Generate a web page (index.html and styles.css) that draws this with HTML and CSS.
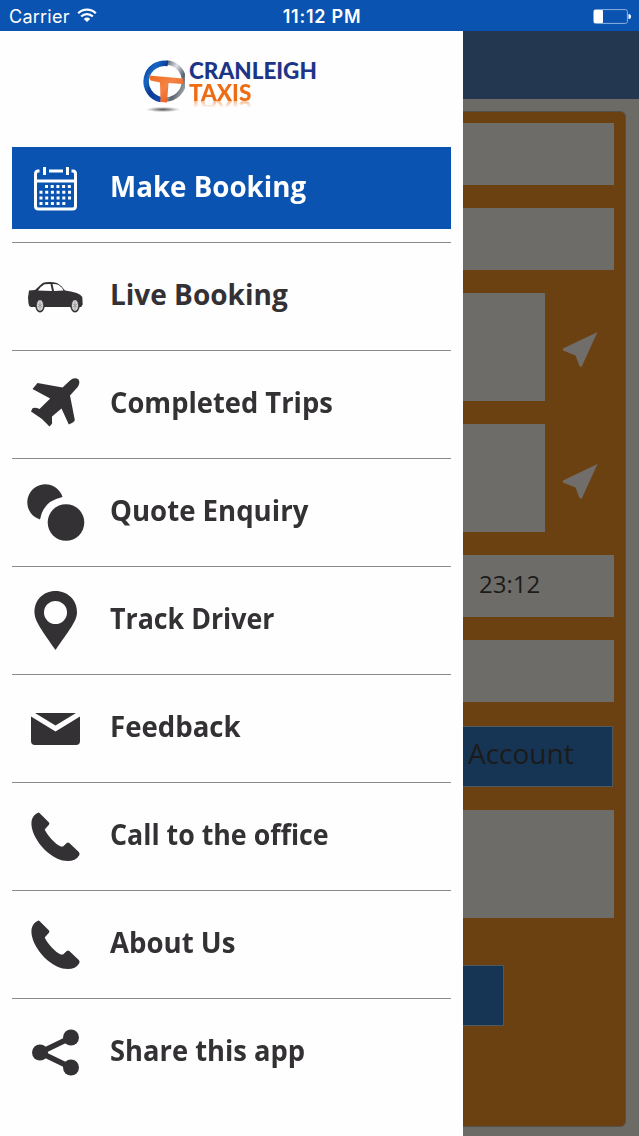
FILE: index.html
```
<!DOCTYPE html>
<html lang="en">
<head>
    <meta charset="UTF-8">
    <meta name="viewport" content="width=device-width, initial-scale=1.0">
    <title>Cranleigh Taxis</title>
    <link rel="stylesheet" href="styles.css">
</head>
<body>
    <header class="status-bar">
        <div class="carrier">
            <span>Carrier</span>
            <svg width="20" height="15" viewBox="0 0 20 15" fill="none" stroke="#fff" stroke-width="2.3">
                <path d="M1.2 5.2a12.5 12.5 0 0 1 17.6 0"/>
                <path d="M4.2 8.5a8.2 8.2 0 0 1 11.6 0"/>
                <path d="M10 14 6.8 10.9a4.6 4.6 0 0 1 6.4 0z" fill="#fff" stroke="none"/>
            </svg>
        </div>
        <div class="clock">11:12 PM</div>
        <div class="battery">
            <svg width="38" height="15" viewBox="0 0 38 15">
                <rect x=".6" y=".6" width="33.8" height="13.8" rx="2" fill="none" stroke="#8db2e3"/>
                <rect x="1" y="1" width="9" height="13" rx="1" fill="#fff"/>
                <path d="M35.5 5a2.5 2.5 0 0 1 0 5z" fill="#fff"/>
            </svg>
        </div>
    </header>

    <div class="screen">
        <nav class="drawer">
            <div class="logo">
                <svg width="46" height="56" viewBox="0 0 46 56">
                    <defs>
                        <linearGradient id="ring" x1="0" y1="0" x2="1" y2="1">
                            <stop offset="0" stop-color="#0c3a93"/>
                            <stop offset=".25" stop-color="#1667c4"/>
                            <stop offset=".5" stop-color="#0c3a93"/>
                            <stop offset="1" stop-color="#1450b8"/>
                        </linearGradient>
                        <linearGradient id="steel" x1="0" y1="0" x2="1" y2="1">
                            <stop offset="0" stop-color="#4d5763"/>
                            <stop offset=".35" stop-color="#dfe2e6"/>
                            <stop offset=".65" stop-color="#59626d"/>
                            <stop offset="1" stop-color="#c4c8cc"/>
                        </linearGradient>
                        <linearGradient id="tee" x1="0" y1="0" x2="1" y2="1">
                            <stop offset="0" stop-color="#ee6a1e"/>
                            <stop offset=".45" stop-color="#f58345"/>
                            <stop offset="1" stop-color="#e04c08"/>
                        </linearGradient>
                        <radialGradient id="shade">
                            <stop offset="0" stop-color="#555"/>
                            <stop offset=".5" stop-color="#999" stop-opacity=".8"/>
                            <stop offset="1" stop-color="#ccc" stop-opacity="0"/>
                        </radialGradient>
                    </defs>
                    <ellipse cx="24" cy="51.5" rx="18" ry="2.8" fill="url(#shade)"/>
                    <path d="M27 4.5a18.300 18.300 0 0 1-1 37" fill="none" stroke="url(#steel)" stroke-width="4.500"/>
                    <path d="M29 5.600A18.300 18.300 0 1 0 22 41.600" fill="none" stroke="url(#ring)" stroke-width="5.500"/>
                    <path d="M9.500 17.500 44 20.500v5.500L29.500 25 28 44.500l-6.500-.6-.5-19.400L11.500 22.500z" fill="url(#tee)"/>
                </svg>
                <div class="logo-text">
                    <span class="name">CRANLEIGH</span>
                    <span class="taxis">TAXIS</span>
                </div>
            </div>

            <ul class="menu">
                <li class="item active">
                    <svg class="icon" viewBox="0 0 60 60" fill="none" stroke="#fff">
                        <path d="M12.500 11H11q-2.500 0-2.500 3v32q0 3 3 3h34q3 0 3-3V14q0-3-2.500-3h-1.500M22 11h14M9 21h39" stroke-width="3"/>
                        <path d="M17.500 7v8M40.500 7v8" stroke-width="3"/>
                        <path d="M18 26.500h27M12.500 32.300h33M12.500 38h33M12.500 43.500h27" stroke-width="3" stroke-dasharray="3 2.700"/>
                    </svg>
                    <span class="label make">Make Booking</span>
                </li>
                <li class="item">
                    <svg class="icon" viewBox="0 0 60 60" fill="#333133">
                        <path d="M4 23.500 10 23l6.500-6q1.500-1.500 4-1.700 6-.8 11.500.7 4 2 8 7.500 6 .5 11.700 2.500 4 1.500 5.600 4l.4 7.500-1.500 2.500H6q-2.500-1-2.500-3.500l-.5-6z"/>
                        <path d="M13 23.500q3.500-4.700 6.500-6.200l6-.4L27 24zM27.500 16.900q4-.2 6.500 1.300 3 2 4.500 5.300L29 24z" fill="#fff"/>
                        <g fill="#d8d8d8" stroke="#333133" stroke-width="1.500">
                            <ellipse cx="15" cy="38.500" rx="4" ry="6.300"/>
                            <ellipse cx="50" cy="38.500" rx="4" ry="6.300"/>
                        </g>
                        <path d="M15 33v11M11.500 36l7 5M18.500 36l-7 5M50 33v11M46.500 36l7 5M53.500 36l-7 5" stroke="#888" stroke-width=".7"/>
                    </svg>
                    <span class="label live">Live Booking</span>
                </li>
                <li class="item">
                    <svg class="icon" viewBox="0 0 60 60" fill="#333133">
                        <path d="M53.500 4.500c1.500 2 1 5-.8 7.600L45 20.500l4.800 24.500q-.2 2-6 4.500L36.500 33.500 27 41.500v5q1 2-2.500 5L17 44 6 36.500l1.500-3.200q2.500-1.300 7 .6l10.700-10.400L7.500 14 12.500 8l25 4.500L45 5.500q4.500-4 8.500-1z"/>
                    </svg>
                    <span class="label completed">Completed Trips</span>
                </li>
                <li class="item">
                    <svg class="icon" viewBox="0 0 60 60" fill="#333133">
                        <path d="M37.500 14A18 18 0 1 0 15 36.500Q18 18 37.500 14z"/>
                        <circle cx="41" cy="39.500" r="18.300"/>
                    </svg>
                    <span class="label quote">Quote Enquiry</span>
                </li>
                <li class="item">
                    <svg class="icon" viewBox="0 0 60 60" fill="#333133">
                        <path fill-rule="evenodd" d="M30.500 0C18 0 9 9.500 9.500 22 10 30.500 17 39.500 30.500 59 44 39.500 51.500 30.500 52 22 52.500 9.500 43 0 30.500 0zM30.500 10a11.500 11.500 0 1 1 0 23 11.500 11.500 0 0 1 0-23z"/>
                    </svg>
                    <span class="label track">Track Driver</span>
                </li>
                <li class="item">
                    <svg class="icon" viewBox="0 0 60 60" fill="#333133">
                        <path d="M10 14h41L30.500 26.500z"/>
                        <path d="M6 17.500 30.500 32.500 55 17.500V42q0 4-4 4H10q-4 0-4-4z"/>
                    </svg>
                    <span class="label feedback">Feedback</span>
                </li>
                <li class="item">
                    <svg class="icon" viewBox="0 -4 60 60" fill="#333133">
                        <path d="M14.500 2 24 11.500q1 1.300-.3 2.500l-4 4.500c2.500 6 10.500 14.500 16 17h2.300l3.800-3.500q1.200-1 2.500 0l9.500 9q1.500 1.600.3 3.500-3.300 5.500-11.600 5.500C30 50 14 37 8 21 4.200 9 8 4.500 12.500 2q1-.8 2 0z"/>
                    </svg>
                    <span class="label call">Call to the office</span>
                </li>
                <li class="item">
                    <svg class="icon" viewBox="0 -4 60 60" fill="#333133">
                        <path d="M14.500 2 24 11.500q1 1.300-.3 2.500l-4 4.500c2.500 6 10.500 14.500 16 17h2.300l3.800-3.500q1.200-1 2.500 0l9.500 9q1.500 1.600.3 3.500-3.300 5.500-11.600 5.500C30 50 14 37 8 21 4.200 9 8 4.500 12.500 2q1-.8 2 0z"/>
                    </svg>
                    <span class="label about">About Us</span>
                </li>
                <li class="item">
                    <svg class="icon" viewBox="0 -3.500 60 60" fill="#333133">
                        <path d="M46 11 15 26l31 15" fill="none" stroke="#333133" stroke-width="5.500"/>
                        <circle cx="15" cy="26" r="8"/>
                        <circle cx="46" cy="11" r="8"/>
                        <circle cx="46" cy="41" r="8"/>
                    </svg>
                    <span class="label share">Share this app</span>
                </li>
            </ul>
        </nav>

        <main class="page">
            <div class="title-bar"></div>
            <div class="form">
                <div class="field"></div>
                <div class="field"></div>
                <div class="place">
                    <div class="field tall"></div>
                    <svg width="36" height="36" viewBox="0 0 36 36"><path d="M34.500 0 18.500 35l-2-1-4-10.500L0 18.500v-2z" fill="#706d6b"/></svg>
                </div>
                <div class="place">
                    <div class="field tall"></div>
                    <svg width="36" height="36" viewBox="0 0 36 36"><path d="M34.500 0 18.500 35l-2-1-4-10.500L0 18.500v-2z" fill="#706d6b"/></svg>
                </div>
                <div class="field time">23:12</div>
                <div class="field"></div>
                <div class="button account">Account</div>
                <div class="field tall"></div>
                <div class="button submit"></div>
            </div>
        </main>
    </div>
</body>
</html>
```
FILE: styles.css
```
* {
    box-sizing: border-box;
}
body {
    margin: 0;
    height: 1136px;
    overflow: hidden;
    background-color: #fefefe;
    font-family: "Open Sans", "Noto Sans", sans-serif;
}
.status-bar {
    display: grid;
    grid-template-columns: 1fr auto 1fr;
    align-items: center;
    height: 31px;
    padding: 2px 8px 0 9px;
    background-color: #0a53b0;
    color: #fff;
    font-family: Inter, "Liberation Sans", sans-serif;
    font-size: 18px;
}
.carrier {
    display: flex;
    align-items: center;
    gap: 7px;
    font-weight: 400;
    letter-spacing: 0.25px;
}
.carrier svg {
    margin-top: -3px;
}
.clock {
    padding-left: 4px;
    font-weight: 600;
    letter-spacing: 0.75px;
}
.battery {
    display: flex;
    justify-content: flex-end;
}
.screen {
    display: flex;
    height: 1105px;
}
.drawer {
    flex: 0 0 463px;
    padding: 0 12px;
    background-color: #fefefe;
}
.logo {
    display: flex;
    height: 116px;
    padding: 27px 0 0 127px;
}
.logo svg {
    flex: none;
}
.logo-text {
    display: flex;
    flex-direction: column;
    margin-left: 4px;
    font-family: Lato, sans-serif;
    font-weight: 900;
    font-size: 22.5px;
    line-height: 22px;
}
.name {
    margin-top: 2px;
    color: #1c3587;
}
.taxis {
    color: #ee6c12;
    -webkit-box-reflect: below -6px linear-gradient(transparent 55%, rgba(0,0,0,0.5) 90%);
}
.menu {
    margin: 0;
    padding: 0;
    list-style: none;
}
.item {
    display: flex;
    align-items: center;
    height: 108px;
    border-top: 1px solid #8a8a8a;
    color: #333133;
}
.item.active {
    height: 82px;
    margin-bottom: 13px;
    border-top: none;
    background-color: #0a53b0;
    color: #fff;
}
.icon {
    flex: none;
    width: 60px;
    height: 60px;
    margin: 0 25px 0 13px;
}
.active .icon {
    margin: 3px 23px 0 15px;
}
.label {
    padding-bottom: 6px;
    font-size: 28px;
    font-weight: 700;
    line-height: 40px;
    white-space: nowrap;
    transform-origin: left center;
}
.make {
    padding-bottom: 4px;
    transform: scaleX(0.99);
}
.completed, .share {
    transform: scaleX(0.976);
}
.quote, .feedback, .about {
    transform: scaleX(0.985);
}
.track, .call {
    transform: scaleX(0.956);
}
.page {
    flex: 1;
    background-color: #6c6b66;
    color: #1c1b1a;
}
.title-bar {
    height: 68px;
    background-color: #233750;
}
.form {
    display: flex;
    flex-direction: column;
    gap: 23px;
    width: 163px;
    height: 1016px;
    margin-top: 12px;
    padding: 11.3px 11px 0 0;
    border: 1px solid #54504a;
    border-left: none;
    border-top-right-radius: 6px;
    border-bottom-right-radius: 6px;
    background-color: #6c4111;
}
.field {
    height: 61.8px;
    background-color: #6e6c69;
}
.tall {
    height: 108.2px;
}
.place {
    display: flex;
    align-items: center;
    gap: 18px;
}
.place .field {
    width: 82px;
}
.place svg {
    margin-top: 7px;
}
.time {
    padding-left: 16px;
    font-size: 24px;
    line-height: 57px;
}
.button {
    flex: none;
    height: 61px;
    border: 1px solid #4c5a62;
    border-left: none;
    background-color: #163454;
}
.account {
    margin: 1px 1px 0 0;
    padding-left: 5px;
    font-size: 28px;
    line-height: 53px;
}
.submit {
    width: 41px;
    margin-top: 24px;
}
```
